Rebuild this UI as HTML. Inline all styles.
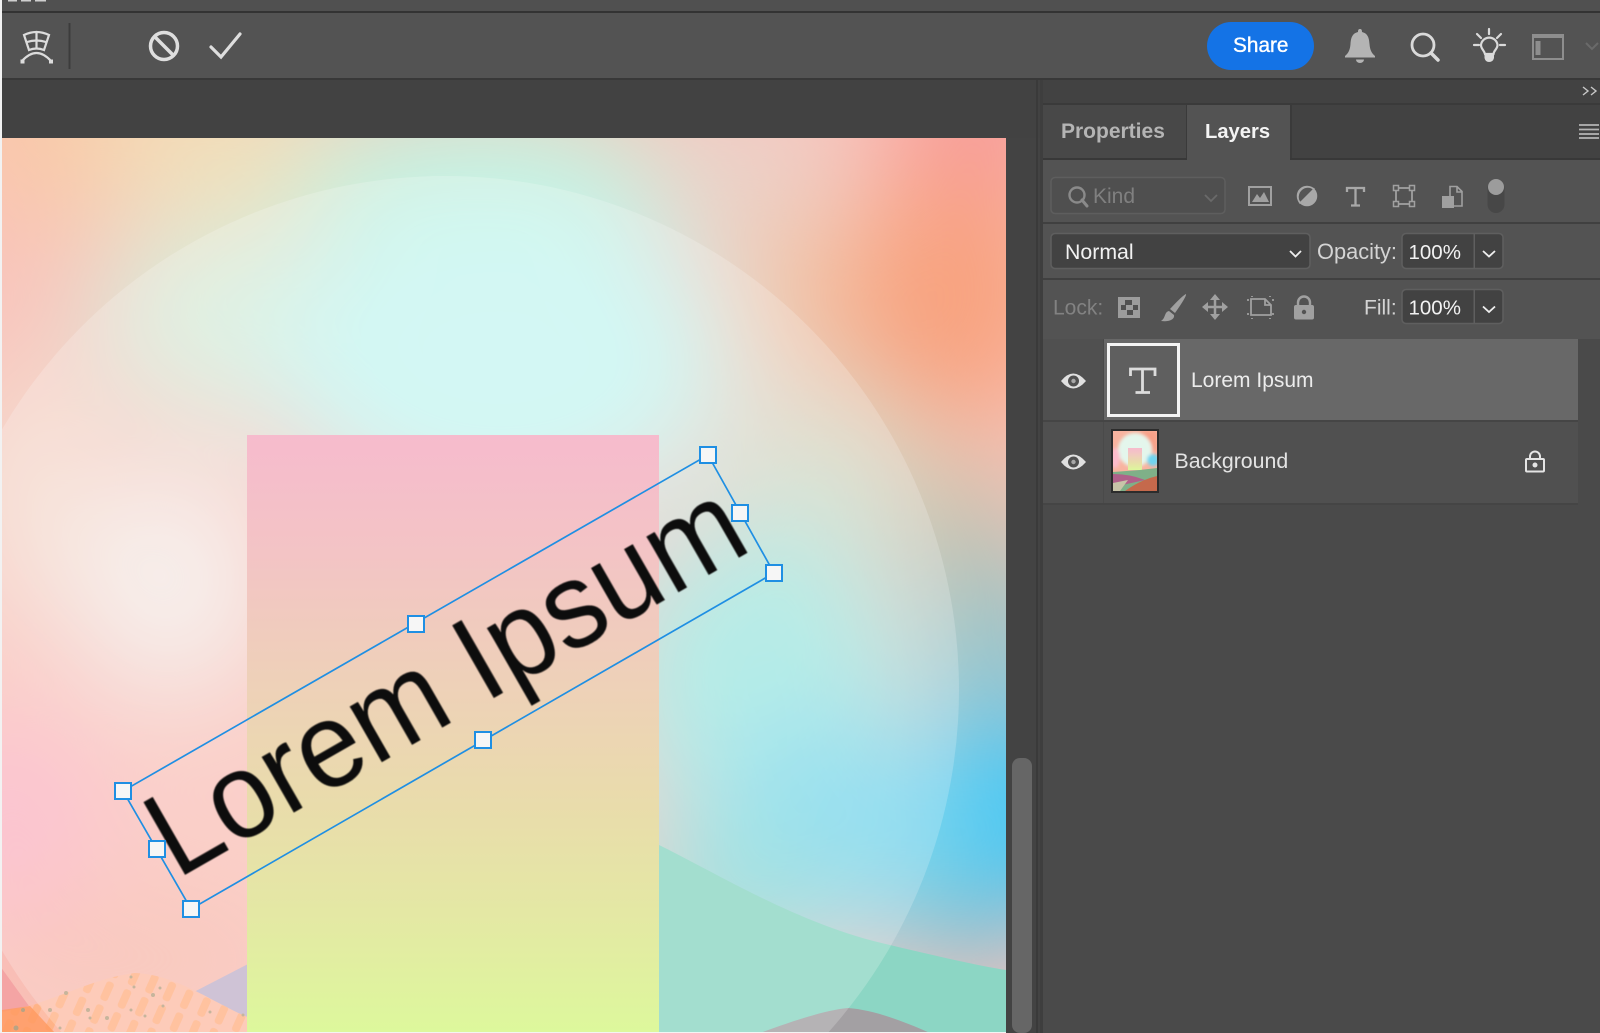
<!DOCTYPE html>
<html><head><meta charset="utf-8"><title>Layers</title>
<style>html,body{margin:0;padding:0;background:#fff;width:1600px;height:1033px;overflow:hidden}svg{display:block}text{font-family:"Liberation Sans",sans-serif}</style>
</head><body>
<svg xmlns="http://www.w3.org/2000/svg" width="1600" height="1033" viewBox="0 0 1600 1033">
<defs>
<clipPath id="cv"><rect x="2" y="138" width="1004" height="894"/></clipPath>
<filter id="b1" filterUnits="userSpaceOnUse" x="-200" y="-100" width="1500" height="1133"><feGaussianBlur stdDeviation="55"/></filter>
<filter id="soft"><feGaussianBlur stdDeviation="0.6"/></filter>
<filter id="t1"><feGaussianBlur stdDeviation="1.6"/></filter>
<linearGradient id="rg" x1="0" y1="0" x2="0" y2="1"><stop offset="0" stop-color="#f6bbcd"/><stop offset=".2" stop-color="#f3c4c5"/><stop offset=".42" stop-color="#eed1b8"/><stop offset=".62" stop-color="#e9dcab"/><stop offset=".8" stop-color="#e4e8a4"/><stop offset="1" stop-color="#ddf89c"/></linearGradient>
<pattern id="st" width="19" height="25" patternUnits="userSpaceOnUse" patternTransform="rotate(24)"><rect x="3" y="2" width="8" height="20" rx="3" fill="#ffb387"/></pattern>
<clipPath id="tc"><rect x="1113" y="431" width="44" height="60"/></clipPath>
</defs>
<rect width="1600" height="1033" fill="#f2f2f2"/>
<rect x="2" y="0" width="1598" height="12" fill="#505050"/>
<rect x="8" y="0" width="9" height="1.500" fill="#cfcfcf"/><rect x="21" y="0" width="10" height="1.500" fill="#cfcfcf"/><rect x="35" y="0" width="11" height="1.500" fill="#cfcfcf"/>
<rect x="2" y="11" width="1598" height="2" fill="#333"/>
<rect x="2" y="13" width="1598" height="66" fill="#535353"/>
<rect x="2" y="78" width="1598" height="2" fill="#383838"/>
<rect x="2" y="80" width="1038" height="58" fill="#424242"/>
<rect x="1006" y="138" width="34" height="895" fill="#434343"/>
<rect x="1012" y="758" width="20" height="275" rx="8" fill="#666"/>
<rect x="1036" y="80" width="2" height="953" fill="#3a3a3a"/>

<g clip-path="url(#cv)">
<rect x="2" y="138" width="1004" height="894" fill="#f9c4bc"/>
<g filter="url(#b1)">
<ellipse cx="60" cy="120" rx="110" ry="110" fill="#f9c8a8"/>
<ellipse cx="220" cy="140" rx="130" ry="80" fill="#f2dfb8"/>
<ellipse cx="480" cy="190" rx="190" ry="90" fill="#c4f2dc"/>
<ellipse cx="220" cy="320" rx="130" ry="100" fill="#d8eedc"/>
<ellipse cx="500" cy="360" rx="230" ry="170" fill="#c8f6f2"/>
<ellipse cx="750" cy="170" rx="80" ry="60" fill="#e8d4cc"/>
<ellipse cx="800" cy="290" rx="70" ry="80" fill="#efc8aa"/>
<ellipse cx="980" cy="120" rx="90" ry="90" fill="#f89a98"/>
<ellipse cx="950" cy="300" rx="110" ry="130" fill="#f8a27e"/>
<ellipse cx="820" cy="470" rx="100" ry="90" fill="#d4dcc8"/>
<ellipse cx="965" cy="530" rx="70" ry="60" fill="#c0c0a8"/>
<ellipse cx="170" cy="580" rx="100" ry="120" fill="#f4ece8"/>
<ellipse cx="30" cy="480" rx="50" ry="130" fill="#f4e2d4"/>
<ellipse cx="10" cy="830" rx="80" ry="110" fill="#fcb4c8"/>
<ellipse cx="760" cy="680" rx="150" ry="160" fill="#a4e8e2"/>
<ellipse cx="1000" cy="640" rx="60" ry="80" fill="#78c4cc"/>
<ellipse cx="1010" cy="820" rx="110" ry="110" fill="#38c6f6"/>
<ellipse cx="840" cy="830" rx="130" ry="110" fill="#7cd8ee"/>
<ellipse cx="730" cy="900" rx="100" ry="80" fill="#90dcd8"/>
<ellipse cx="970" cy="930" rx="60" ry="40" fill="#78bcc8"/>
<ellipse cx="130" cy="960" rx="170" ry="70" fill="#f8bcae"/>
</g>
<path d="M0 966 L29 1006 L0 1015 Z" fill="#f4a4a4"/>
<path d="M190 994 L250 963 V1020 Z" fill="#c4b4cc"/>
<path d="M0 1012 C50 1005 90 978 135 973 C180 975 215 1005 255 1020 V1033 H0 Z" fill="#fdbea8"/>
<path d="M0 1012 C50 1005 90 978 135 973 C180 975 215 1005 255 1020 V1033 H0 Z" fill="url(#st)"/>
<path d="M2 1010 L30 1006 L55 1033 H2 Z" fill="#ff9a60" opacity=".8"/>
<g fill="#b8a384"><circle cx="66" cy="993" r="2"/><circle cx="50" cy="1010" r="2"/><circle cx="23" cy="1010" r="2"/><circle cx="16" cy="1028" r="2.500"/><circle cx="88" cy="1010" r="2"/><circle cx="90" cy="1018" r="1.500"/><circle cx="107" cy="1018" r="2"/><circle cx="131" cy="977" r="1.500"/><circle cx="134" cy="987" r="1.500"/><circle cx="153" cy="995" r="2"/><circle cx="160" cy="988" r="1.500"/><circle cx="163" cy="1006" r="1.500"/><circle cx="145" cy="1016" r="1.500"/><circle cx="131" cy="1010" r="1.500"/><circle cx="60" cy="1028" r="1.500"/><circle cx="210" cy="1012" r="1.500"/><circle cx="243" cy="1015" r="1.500"/></g>
<path d="M659 845 C720 875 800 925 890 945 C940 957 980 966 1006 970 V1033 H659 Z" fill="#8cd6c4"/>
<path d="M760 1033 C790 1022 825 1010 848 1008 C875 1010 905 1022 930 1033 Z" fill="#a3a0a3"/>
<path d="M62.200 1033 A514 514 0 1 1 827.800 1033 Z" fill="#fff" opacity=".2"/>
<rect x="247" y="435" width="412" height="598" fill="url(#rg)"/>
<text transform="translate(177 879.500) rotate(-29.800)" font-size="122" fill="#0a0a0a" textLength="665" lengthAdjust="spacingAndGlyphs" filter="url(#soft)">Lorem Ipsum</text>
<g fill="none" stroke="#1f8fe3" stroke-width="1.700"><path d="M123 791 L708 455 L774 573 L191 909 Z"/></g>
<g fill="#f6f6f6" stroke="#1f8fe3" stroke-width="2">
<rect x="115" y="783" width="16" height="16"/><rect x="700" y="447" width="16" height="16"/><rect x="766" y="565" width="16" height="16"/><rect x="183" y="901" width="16" height="16"/>
<rect x="408" y="616" width="16" height="16"/><rect x="475" y="732" width="16" height="16"/><rect x="149" y="841" width="16" height="16"/><rect x="732" y="505" width="16" height="16"/>
</g>
</g>
<rect x="2" y="1032" width="1004" height="1" fill="#f4f4f4"/>

<!-- toolbar icons -->
<g fill="none" stroke="#dcdcdc" stroke-width="2.200" stroke-linecap="round">
<path d="M24 35 Q36.500 29 49 35 L44 50 Q36.500 47 29 50 Z"/><path d="M27 42 Q36.500 39 46 42"/><path d="M36.500 32 V48"/><path d="M22 61 Q36.500 45 51 61"/>
</g>
<rect x="20.500" y="59.500" width="4" height="4" fill="#dcdcdc"/><rect x="49" y="59.500" width="4" height="4" fill="#dcdcdc"/>
<rect x="68.500" y="23" width="2" height="46" fill="#3c3c3c"/>
<g fill="none" stroke="#dedede" stroke-linecap="round">
<circle cx="164" cy="46" r="13.500" stroke-width="3.500"/><path d="M155 37 L173 55" stroke-width="3.500" stroke-linecap="butt"/>
<path d="M211 47 L221 57 L240 34" stroke-width="3.200"/>
</g>

<rect x="1207" y="22" width="107" height="48" rx="24" fill="#1473e6"/>
<text x="1233" y="52" font-size="20.800" fill="#fff" stroke="#fff" stroke-width=".35">Share</text>
<path d="M1360 29 c1.500 0 2 1 2 3 c6 1.500 7 6 7.500 12 c.5 6 2 9 5.500 12 v1.500 h-30 v-1.500 c3.500-3 5-6 5.500-12 c.5-6 1.500-10.500 7.500-12 c0-2 .5-3 2-3z" fill="#b4b4b4"/>
<path d="M1356 59.500 h8 a4 3.500 0 0 1 -8 0z" fill="#b4b4b4"/>
<g fill="none" stroke="#dadada" stroke-linecap="round">
<circle cx="1423" cy="45" r="11" stroke-width="2.800"/><path d="M1431 53 L1438 60" stroke-width="3.500"/>
<g stroke-width="2.200"><path d="M1489 29 V34"/><path d="M1477 34 L1481 38"/><path d="M1501 34 L1497 38"/><path d="M1474 45 H1479"/><path d="M1500 45 H1505"/>
<path d="M1485 54 C1484 50 1481 49 1481 45 A8.300 8.300 0 0 1 1497.500 45 C1497.500 49 1494 50 1493.500 54 Z"/></g>
</g>
<path d="M1484.500 53 H1494 V58 Q1493 62 1489 62 Q1485.500 62 1484.500 58 Z" fill="#dadada"/>
<rect x="1533" y="35" width="30" height="24" fill="none" stroke="#8e8e8e" stroke-width="2"/><rect x="1533" y="34" width="30" height="4" fill="#8e8e8e"/><rect x="1535.500" y="41" width="5" height="14" fill="#8e8e8e"/>
<path d="M1586 43 L1592 49 L1598 43" fill="none" stroke="#6a6a6a" stroke-width="2"/>

<!-- panel -->
<rect x="1040" y="80" width="560" height="953" fill="#4a4a4a"/>
<rect x="1040" y="80" width="560" height="23" fill="#424242"/>
<rect x="1040" y="103" width="560" height="2" fill="#3a3a3a"/>
<rect x="1040" y="105" width="560" height="55" fill="#424242"/>
<rect x="1040" y="105" width="146" height="54" fill="#484848"/>
<rect x="1186" y="104" width="2" height="56" fill="#3a3a3a"/>
<rect x="1187" y="105" width="103" height="56" fill="#535353"/>
<rect x="1290" y="104" width="2" height="56" fill="#3a3a3a"/>
<rect x="1040" y="158" width="147" height="2" fill="#383838"/><rect x="1290" y="158" width="310" height="2" fill="#383838"/>
<rect x="1043" y="160" width="557" height="62" fill="#535353"/>
<rect x="1043" y="222" width="557" height="2" fill="#404040"/>
<rect x="1043" y="224" width="557" height="54" fill="#535353"/>
<rect x="1043" y="278" width="557" height="2" fill="#404040"/>
<rect x="1043" y="280" width="557" height="59" fill="#535353"/>
<rect x="1040" y="80" width="3" height="953" fill="#3e3e3e"/>
<rect x="1043" y="339" width="60" height="81" fill="#505050"/>
<rect x="1104" y="339" width="474" height="81" fill="#686868"/>
<rect x="1043" y="420" width="535" height="2" fill="#454545"/>
<rect x="1043" y="422" width="60" height="81" fill="#505050"/>
<rect x="1104" y="422" width="474" height="81" fill="#505050"/>
<rect x="1043" y="503" width="535" height="2" fill="#454545"/>
<rect x="1578" y="339" width="22" height="694" fill="#4a4a4a"/>
<rect x="1043" y="505" width="535" height="528" fill="#4a4a4a"/>

<path d="M1583 87 L1588 91 L1583 95 M1591 87 L1596 91 L1591 95" fill="none" stroke="#c8c8c8" stroke-width="1.400"/>
<text x="1061" y="138" font-size="21" font-weight="700" fill="#b4b4b4">Properties</text>
<text x="1205" y="138" font-size="20.200" font-weight="700" fill="#f4f4f4">Layers</text>
<path d="M1579 125 H1599 M1579 129.500 H1599 M1579 134 H1599 M1579 138 H1599" stroke="#b4b4b4" stroke-width="1.800"/>

<!-- Kind row -->
<rect x="1051" y="177.500" width="174" height="36" rx="4" fill="#4f4f4f" stroke="#5e5e5e" stroke-width="1.500"/>
<circle cx="1077" cy="195" r="7.500" fill="none" stroke="#8a8a8a" stroke-width="2.400"/><path d="M1082 200 L1087 206" stroke="#8a8a8a" stroke-width="3" stroke-linecap="round"/>
<text x="1093" y="203" font-size="21" fill="#808080">Kind</text>
<path d="M1205 195 L1211 201 L1217 195" fill="none" stroke="#6a6a6a" stroke-width="1.800"/>
<rect x="1249" y="187" width="22" height="18" fill="none" stroke="#a0a0a0" stroke-width="2"/><path d="M1252 202 L1257 194 L1260 198 L1264 192 L1269 202 Z" fill="#a0a0a0"/>
<circle cx="1307" cy="196" r="10" fill="#a8a8a8"/><path d="M1300 203 A10 10 0 0 1 1314 189 Z" fill="#555" stroke="#a8a8a8" stroke-width="1.500"/><circle cx="1307" cy="196" r="9.500" fill="none" stroke="#a8a8a8" stroke-width="1.500"/>
<path d="M1347 192 V188 H1364 V192 M1355.500 188 V205 M1351 205.500 H1360" fill="none" stroke="#a8a8a8" stroke-width="2.300"/>
<rect x="1396" y="188" width="16" height="16" fill="none" stroke="#a0a0a0" stroke-width="1.800"/>
<g fill="#555" stroke="#a0a0a0" stroke-width="1.500"><rect x="1393.500" y="185.500" width="5" height="5"/><rect x="1409.500" y="185.500" width="5" height="5"/><rect x="1393.500" y="201.500" width="5" height="5"/><rect x="1409.500" y="201.500" width="5" height="5"/></g>
<path d="M1450 196 V186.500 H1457 L1462 191.500 V206 H1454 M1457 186.500 V192 H1462" fill="none" stroke="#a0a0a0" stroke-width="1.600"/><rect x="1442" y="196" width="12" height="12" fill="#a0a0a0"/>
<rect x="1487.500" y="180" width="17" height="33" rx="8.500" fill="#474747"/><circle cx="1496" cy="187" r="8" fill="#9c9c9c"/>

<!-- blend row -->
<rect x="1051" y="233.500" width="259" height="35" rx="4" fill="#424242" stroke="#5f5f5f" stroke-width="1.500"/>
<text x="1065" y="259" font-size="21.300" fill="#f2f2f2">Normal</text>
<path d="M1290 251 L1295.500 256.500 L1301 251" fill="none" stroke="#eee" stroke-width="1.800"/>
<text x="1317" y="259" font-size="21.800" fill="#d4d4d4">Opacity:</text>
<rect x="1402" y="233.500" width="101" height="35" rx="4" fill="#424242" stroke="#5f5f5f" stroke-width="1.500"/><rect x="1473.500" y="234" width="1.500" height="34" fill="#5f5f5f"/>
<text x="1408.500" y="259" font-size="20.500" fill="#f2f2f2">100%</text>
<path d="M1483 251 L1489 256.500 L1495 251" fill="none" stroke="#eee" stroke-width="1.800"/>

<!-- lock row -->
<text x="1053" y="314.500" font-size="21" fill="#828282">Lock:</text>
<rect x="1118" y="297" width="22" height="21" fill="#9c9c9c"/>
<g fill="#505050"><rect x="1125" y="300" width="7" height="5"/><rect x="1133" y="305" width="5" height="5"/><rect x="1121" y="305" width="5" height="5"/><rect x="1127" y="310" width="6" height="5"/></g>
<path d="M1186 294 Q1187 296 1175 313 L1170 309 Q1183 295 1186 294 Z M1169 311 C1164 312 1166 318 1161 321 C1168 322 1175 320 1174 315 Z" fill="#a0a0a0"/>
<path d="M1215 297 V317 M1205 307 H1225" stroke="#a0a0a0" stroke-width="2.500"/>
<path d="M1215 294 L1220 300 H1210 Z M1215 320 L1220 314 H1210 Z M1202 307 L1208 302 V312 Z M1228 307 L1222 302 V312 Z" fill="#a0a0a0"/>
<path d="M1251 299 H1265 L1271 305 V315 H1251 Z M1265 299 V305 H1271" fill="none" stroke="#a0a0a0" stroke-width="1.800"/>
<path d="M1247 300 H1249 M1274 300 H1272 M1247 314 H1249 M1252 296 V297 M1252 318 V319 M1270 318 V319 M1274 314 H1272 M1270 296 V297" stroke="#a0a0a0" stroke-width="1.800"/>
<rect x="1294" y="305" width="20" height="14.500" rx="2" fill="#a0a0a0"/><path d="M1298 306 V302.500 A6 6 0 0 1 1310 302.500 V306" fill="none" stroke="#a0a0a0" stroke-width="2.400"/><circle cx="1304" cy="312" r="2.200" fill="#535353"/>
<text x="1364" y="314.500" font-size="21" fill="#d4d4d4">Fill:</text>
<rect x="1402" y="289.500" width="101" height="34" rx="4" fill="#424242" stroke="#5f5f5f" stroke-width="1.500"/><rect x="1473.500" y="290" width="1.500" height="33" fill="#5f5f5f"/>
<text x="1408.500" y="314.500" font-size="20.500" fill="#f2f2f2">100%</text>
<path d="M1483 306.500 L1489 312 L1495 306.500" fill="none" stroke="#eee" stroke-width="1.800"/>

<!-- layer 1 -->
<g><path d="M1061 381 Q1073 366 1086 381 Q1073 396 1061 381 Z" fill="#e0e0e0"/><circle cx="1073.500" cy="381" r="5.500" fill="#505050"/><circle cx="1073.500" cy="381" r="2.200" fill="#a8a8a8"/></g>
<rect x="1108.500" y="344.500" width="70" height="71" fill="#5f5f5f" stroke="#f4f4f4" stroke-width="3"/>
<path d="M1130.500 376 V369 H1155 V376 M1142.500 369 V392.500 M1135.500 392.500 H1150" fill="none" stroke="#dcdcdc" stroke-width="2.800"/>
<text x="1191" y="387" font-size="21" fill="#ececec">Lorem Ipsum</text>

<!-- layer 2 -->
<g><path d="M1061 462 Q1073 447 1086 462 Q1073 477 1061 462 Z" fill="#e0e0e0"/><circle cx="1073.500" cy="462" r="5.500" fill="#505050"/><circle cx="1073.500" cy="462" r="2.200" fill="#a8a8a8"/></g>
<rect x="1111" y="429" width="48" height="64" fill="#2c2c2c"/>
<g clip-path="url(#tc)">
<rect x="1113" y="431" width="44" height="60" fill="#f8b4a0"/>
<g filter="url(#t1)">
<rect x="1140" y="431" width="17" height="20" fill="#f7a088"/>
<circle cx="1135" cy="450" r="17" fill="#e4f6ec"/>
<circle cx="1153" cy="460" r="6" fill="#70d4ef"/>
<ellipse cx="1115" cy="458" rx="5" ry="10" fill="#fcbccc"/>
</g>
<rect x="1128" y="448" width="14" height="22" fill="url(#rg)"/>
<path d="M1113 472 L1140 470 L1157 468 V491 H1113 Z" fill="#7fb088"/>
<path d="M1113 474 Q1130 474 1145 480 L1113 487 Z" fill="#b0608a"/>
<path d="M1125 491 Q1140 480 1157 476 V491 Z" fill="#c5694c"/>
<path d="M1113 483 L1128 480 L1120 491 H1113 Z" fill="#c8c4a8"/>
</g>
<text x="1174.500" y="468" font-size="21.300" fill="#e4e4e4">Background</text>
<rect x="1526" y="459" width="18" height="12.500" rx="1" fill="none" stroke="#e4e4e4" stroke-width="2"/><path d="M1530 459 V456.500 A5 5 0 0 1 1540 456.500 V459" fill="none" stroke="#e4e4e4" stroke-width="2"/><circle cx="1535" cy="465" r="2.500" fill="#e4e4e4"/>
</svg>
</body></html>
